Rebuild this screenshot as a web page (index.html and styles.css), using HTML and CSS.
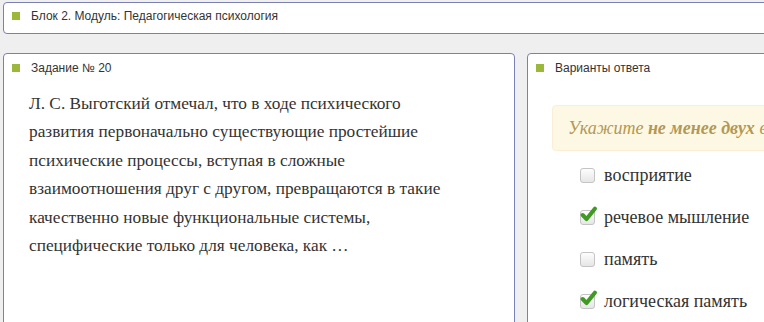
FILE: index.html
```html
<!DOCTYPE html>
<html lang="ru">
  <head>
    <meta charset="utf-8">
    <meta name="viewport" content="width=device-width, initial-scale=1.0">
    <title>Тестирование</title>
    <link rel="stylesheet" href="styles.css">
  </head>
  <body>
    <div class="page">
      <div class="panel block-panel">
        <div class="panel-title"><span class="marker"></span>Блок 2. Модуль: Педагогическая психология</div>
      </div>
      <div class="row">
        <div class="panel task-panel">
          <div class="panel-title"><span class="marker"></span>Задание № 20</div>
          <p class="question">Л. С. Выготский отмечал, что в ходе психического развития первоначально существующие простейшие психические процессы, вступая в сложные взаимоотношения друг с другом, превращаются в такие качественно новые функциональные системы, специфические только для человека, как …</p>
        </div>
        <div class="panel answers-panel">
          <div class="panel-title"><span class="marker"></span>Варианты ответа</div>
          <div class="hint">Укажите <b>не менее двух</b> вариантов ответа</div>
          <ul class="options">
            <li class="option"><span class="checkbox"></span>восприятие</li>
            <li class="option checked"><span class="checkbox"><svg viewBox="0 0 16 16" width="17" height="17"><path d="M2.5 8.5 L6.2 12.3 L14 2.5" fill="none" stroke="#3f9a22" stroke-width="3.8" stroke-linecap="round" stroke-linejoin="round"/></svg></span>речевое мышление</li>
            <li class="option"><span class="checkbox"></span>память</li>
            <li class="option checked"><span class="checkbox"><svg viewBox="0 0 16 16" width="17" height="17"><path d="M2.5 8.5 L6.2 12.3 L14 2.5" fill="none" stroke="#3f9a22" stroke-width="3.8" stroke-linecap="round" stroke-linejoin="round"/></svg></span>логическая память</li>
          </ul>
        </div>
      </div>
    </div>
  </body>
</html>
```

FILE: styles.css
```css
html, body {
  margin: 0;
  padding: 0;
  overflow: hidden;
}
body {
  background: #efefef;
  font-family: "Liberation Sans", Arial, sans-serif;
  color: #333;
}
.page {
  width: 1100px;
  padding: 2px 0 0 3px;
}
.panel {
  background: #fff;
  border: 1px solid #7b80b4;
  border-radius: 4px;
  box-sizing: border-box;
}
.block-panel {
  height: 32px;
}
.panel-title {
  display: flex;
  align-items: center;
  height: 27px;
  padding-left: 8px;
  font-size: 12px;
  color: #333;
}
.block-panel .panel-title {
  height: 26px;
}
.marker {
  display: inline-block;
  width: 8px;
  height: 8px;
  background: #9cb83a;
  margin-right: 11px;
}
.row {
  display: flex;
  gap: 12px;
  margin-top: 19px;
}
.task-panel {
  width: 512px;
  height: 300px;
}
.answers-panel {
  width: 500px;
  height: 300px;
}
.question {
  margin: 9px 0 0 25px;
  width: 420px;
  font-family: "Liberation Serif", "Times New Roman", serif;
  font-size: 17.3px;
  line-height: 28.4px;
  color: #333;
}
.hint {
  margin: 24px 0 0 24px;
  height: 44px;
  padding: 0 15px;
  line-height: 44px;
  white-space: nowrap;
  background: #fcf8e3;
  border: 1px solid #fbeed5;
  border-radius: 4px;
  font-family: "Liberation Serif", "Times New Roman", serif;
  font-style: italic;
  font-size: 18px;
  color: #b39755;
}
.hint b {
  font-weight: bold;
}
.options {
  list-style: none;
  margin: 3px 0 0 52px;
  padding: 0;
}
.option {
  display: flex;
  align-items: center;
  height: 42px;
  font-family: "Liberation Serif", "Times New Roman", serif;
  font-size: 18px;
  color: #333;
}
.checkbox {
  position: relative;
  width: 13px;
  height: 13px;
  margin-right: 9px;
  border: 1px solid #c4c4c4;
  border-radius: 3px;
  background: linear-gradient(#fdfdfd, #e6e6e6);
  flex-shrink: 0;
}
.checkbox svg {
  position: absolute;
  left: -1px;
  top: -5px;
}
```
